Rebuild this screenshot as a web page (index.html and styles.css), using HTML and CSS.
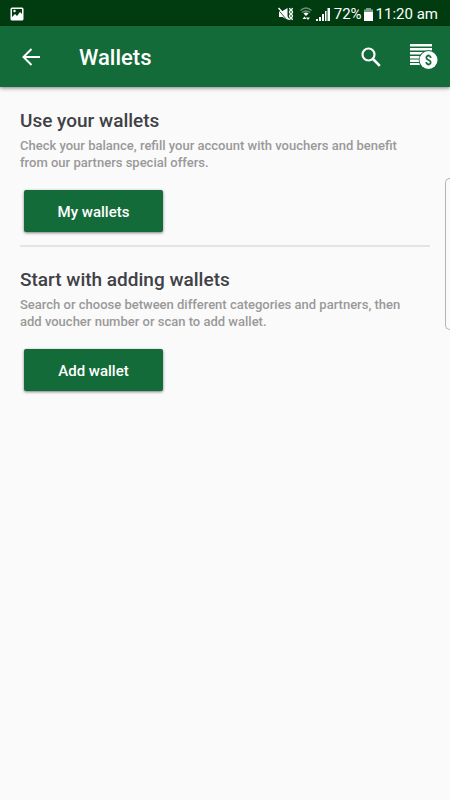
FILE: index.html
```html
<!DOCTYPE html>
<html lang="en">
<head>
<meta charset="utf-8">
<meta name="viewport" content="width=device-width, initial-scale=1">
<title>Wallets</title>
<link rel="stylesheet" href="styles.css">
</head>
<body>
<div class="status">
  <svg class="status-picture" width="14" height="14" viewBox="0 0 14 14" aria-hidden="true">
    <rect x="0.5" y="0.5" width="13" height="13" rx="1.5" fill="#fff"/>
    <path d="M2 2h10v5l-2-2-3 4-2-2-3 3z" fill="#003c10"/>
    <circle cx="4.5" cy="4" r="1.2" fill="#fff"/>
  </svg>
  <div class="status-info">
    <svg class="status-mute" width="16" height="14" viewBox="0 0 16 14" aria-hidden="true">
      <path d="M1 4h3.500L9.500 1v12L4.500 10H1z" fill="#fff"/>
      <path d="M0 2.500 9 13" stroke="#003c10" stroke-width="0.800"/>
      <path d="M0.500 1 11 12.500" stroke="#fff" stroke-width="1.500"/>
      <path d="M11.500 1l1 2-1 2 1 2-1 2 1 2-1 2M14.500 1l-1 2 1 2-1 2 1 2-1 2 1 2" fill="none" stroke="#fff" stroke-width="1.300"/>
    </svg>
    <svg class="status-wifi" width="12" height="14" viewBox="0 0 12 14" aria-hidden="true">
      <path d="M0.500 3.500Q6-1.500 11.500 3.500M2 5.500q4-3 8 0" fill="none" stroke="#6f9478" stroke-width="1.500"/>
      <path d="M3.500 6.500q2.500-2 5 0L6 9z" fill="#fff"/>
      <path d="M2.500 12 4.500 9.500l2 2.500zM6 10.500l2 2.500 2-2.500z" fill="#fff"/>
    </svg>
    <svg class="status-signal" width="14" height="13" viewBox="0 0 14 13" aria-hidden="true">
      <path d="M0 11h2v2H0zM3 9h2v4H3zM6 6h2v7H6zM9 3h2v10H9zM11 0h3v13h-3z" fill="#fff"/>
      <path d="M11 0v13" stroke="#003c10"/>
    </svg>
    <span class="status-level">72%</span>
    <svg class="status-battery" width="9" height="13" viewBox="0 0 9 13" aria-hidden="true">
      <path d="M2 0h5v1.500h2V5H0V1.500h2z" fill="#7f9f88"/>
      <path d="M0 4h9v9H0z" fill="#fff"/>
    </svg>
    <span>11:20 am</span>
  </div>
</div>
<header class="toolbar">
  <button class="icon-button" type="button" aria-label="Back">
    <svg width="18" height="18" viewBox="0 0 18 18" aria-hidden="true">
      <path d="M18 9H1.500M9.500 1 1.500 9l8 8" fill="none" stroke="#fff" stroke-width="2"/>
    </svg>
  </button>
  <h1 class="toolbar-title">Wallets</h1>
  <button class="icon-button" type="button" aria-label="Search">
    <svg width="20" height="20" viewBox="0 0 20 20" aria-hidden="true">
      <circle cx="7.500" cy="7.500" r="6" fill="none" stroke="#fff" stroke-width="2.200"/>
      <path d="M12 12l6.800 6.800" stroke="#fff" stroke-width="2.600"/>
    </svg>
  </button>
  <button class="icon-button vouchers" type="button" aria-label="Vouchers">
    <svg width="28" height="25" viewBox="0 0 28 25" aria-hidden="true">
      <path d="M0 0h22v2.500H0zM0 4h22v2.500H0zM0 8h22v2.500H0zM0 12h22v2.500H0zM0 15.500h22V18H0zM0 19h22v2H0z" fill="#fff"/>
      <circle cx="18.500" cy="16" r="9.800" fill="#126b39"/>
      <circle cx="18.500" cy="16" r="9" fill="#fff"/>
      <path d="M20.700 14c0-3-4.400-3-4.400-.2 0 2.700 4.400 1.700 4.400 4.500 0 2.800-4.400 2.800-4.400-.3M18.500 10.500V12M18.500 20v1.500" fill="none" stroke="#126b39" stroke-width="1.700"/>
    </svg>
  </button>
</header>
<main class="content">
  <section class="card">
    <h2 class="card-title">Use your wallets</h2>
    <p class="card-text">Check your balance, refill your account with vouchers and benefit from our partners special offers.</p>
    <button class="action" type="button">My wallets</button>
  </section>
  <section class="card">
    <h2 class="card-title">Start with adding wallets</h2>
    <p class="card-text">Search or choose between different categories and partners, then add voucher number or scan to add wallet.</p>
    <button class="action" type="button">Add wallet</button>
  </section>
</main>
<div class="edge-handle" aria-hidden="true"></div>
</body>
</html>
```
FILE: styles.css
```css
* {
  box-sizing: border-box;
}

body {
  margin: 0;
  min-height: 100vh;
  overflow-x: hidden;
  background: #fafafa;
  font-family: Roboto, "Liberation Sans", sans-serif;
}

h1,
h2,
p {
  margin: 0;
}

svg {
  display: block;
  flex: none;
}

button {
  border: 0;
  font: inherit;
  cursor: pointer;
}

.status {
  display: flex;
  align-items: center;
  justify-content: space-between;
  height: 26px;
  padding: 2px 12px 0 10px;
  background: #003c10;
  color: #fff;
  font-size: 15px;
  line-height: 24px;
}

.status-info {
  display: flex;
  align-items: center;
}

.status-mute {
  margin-right: 6px;
}

.status-wifi {
  margin-right: 4px;
}

.status-signal {
  margin-right: 4px;
}

.status-battery {
  margin: 0 3px 0 2px;
}

.toolbar {
  display: flex;
  align-items: center;
  height: 61px;
  padding: 0 5px 0 10px;
  background: #126b39;
  box-shadow: 0 1px 4px rgba(0, 0, 0, 0.5);
}

.icon-button {
  display: flex;
  align-items: center;
  justify-content: center;
  width: 42px;
  height: 42px;
  padding: 0;
  background: transparent;
}

.toolbar-title {
  flex: 1;
  margin-left: 27px;
  padding-top: 3px;
  color: #fff;
  font-size: 22px;
  font-weight: 500;
  line-height: 30px;
}

.vouchers {
  margin-left: 11px;
}

.content {
  padding: 0 20px;
}

.card {
  padding: 19px 0 13px;
}

.card:first-child {
  padding-top: 20px;
}

.card + .card {
  border-top: 2px solid #e4e4e4;
}

.card-title {
  color: #404146;
  font-size: 19px;
  font-weight: 500;
  line-height: 28px;
}

.card-text {
  margin-top: 2px;
  padding-right: 20px;
  color: #999;
  font-size: 13px;
  font-weight: 500;
  line-height: 17px;
}

.action {
  display: block;
  width: 139px;
  height: 42px;
  margin: 19px 4px 0;
  padding: 2px 0 0;
  border-radius: 2px;
  background: #126b39;
  box-shadow: 0 1px 3px rgba(0, 0, 0, 0.5);
  color: #fff;
  font-size: 15px;
  font-weight: 500;
}

.edge-handle {
  position: absolute;
  top: 178px;
  right: 0;
  width: 5px;
  height: 152px;
  border: 1px solid #b4b4b4;
  border-right: 0;
  border-radius: 5px 0 0 5px;
  background: #fafafa;
}
```
